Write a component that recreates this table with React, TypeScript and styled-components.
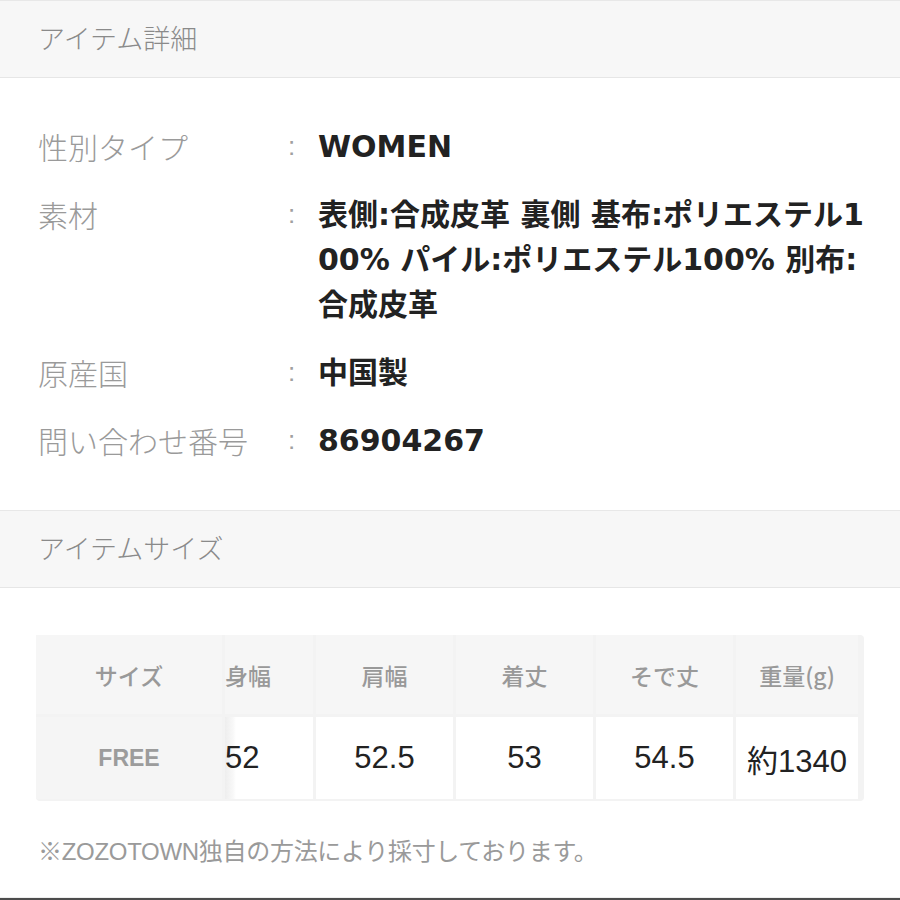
import React, { FunctionComponent } from 'react';
import styled, { createGlobalStyle } from 'styled-components';

const GlobalStyle = createGlobalStyle`
  body {
    margin: 0;
    background: #FFFFFF;
    font-family: "Liberation Sans", "Noto Sans CJK JP", sans-serif;
  }
`;

const Page = styled.div`
  width: 900px;
  height: 900px;
  overflow: hidden;
  display: flex;
  flex-direction: column;
  background: #FFFFFF;
`;

const SectionHeader = styled.div`
  box-sizing: border-box;
  height: 78px;
  display: flex;
  align-items: center;
  padding: 0 0 4px 38px;
  background: #F7F7F7;
  border-top: 1px solid #E8E8E8;
  border-bottom: 1px solid #E6E6E6;
  font-size: 27px;
  color: #8A8A8A;
  font-family: "Noto Sans CJK JP", sans-serif;
  font-weight: 300;
`;

const DetailList = styled.div`
  display: flex;
  flex-direction: column;
  gap: 23px;
  padding: 46px 0 47px 38px;
`;

const DetailRow = styled.div`
  display: grid;
  grid-template-columns: 246px 34px 1fr;
  line-height: 45px;
`;

const DetailLabel = styled.div`
  font-size: 30px;
  color: #9A9A9A;
  font-family: "Noto Sans CJK JP", sans-serif;
  font-weight: 300;
`;

const Colon = styled.div`
  font-size: 26px;
  color: #A0A0A0;
  padding-left: 4px;
`;

const DetailValue = styled.div`
  font-size: 30px;
  font-weight: 700;
  color: #222222;
  white-space: nowrap;
  font-family: "DejaVu Sans", "Noto Sans CJK JP", sans-serif;
`;

const TableArea = styled.div`
  padding: 47px 36px 0 36px;
`;

const SizeTable = styled.div`
  width: 822px;
  padding: 0 6px 2px 0;
  display: grid;
  grid-template-columns: 186px 88px 137px 137px 137px 122px;
  grid-template-rows: 79px 82px;
  column-gap: 3px;
  row-gap: 3px;
  background: #F3F3F3;
  border-radius: 4px;
`;

const HeadCell = styled.div<{ $align?: 'left' | 'center' }>`
  display: flex;
  align-items: center;
  justify-content: ${(p) => (p.$align === 'left' ? 'flex-start' : 'center')};
  background: #F6F6F6;
  font-size: 23px;
  font-weight: 500;
  color: #999999;
  font-family: "Noto Sans CJK JP", sans-serif;
`;

const BodyCell = styled.div<{ $variant?: 'label' | 'edge' | 'plain' }>`
  display: flex;
  align-items: center;
  justify-content: ${(p) => (p.$variant === 'edge' ? 'flex-start' : 'center')};
  background: ${(p) =>
    p.$variant === 'label'
      ? '#F5F5F5'
      : p.$variant === 'edge'
      ? 'linear-gradient(to right, #EEEEEE 0, #F8F8F8 8px, #FFFFFF 11px)'
      : '#FFFFFF'};
  font-size: ${(p) => (p.$variant === 'label' ? '23px' : '31px')};
  font-weight: ${(p) => (p.$variant === 'label' ? 700 : 400)};
  color: ${(p) => (p.$variant === 'label' ? '#9C9C9C' : '#222222')};
`;

const Note = styled.div`
  padding: 36px 0 0 38px;
  font-size: 24px;
  line-height: 30px;
  color: #9A9A9A;
  font-family: "Liberation Sans", "Noto Sans CJK JP", sans-serif;
  letter-spacing: -0.3px;
`;

const Spacer = styled.div`
  flex: 1;
`;

const BottomEdge = styled.div`
  height: 2px;
  border-top: 1px solid #EEEEEE;
  background: #4C4C4C;
  margin-top: 1px;
`;

const details: { label: string; value: React.ReactNode }[] = [
  { label: '性別タイプ', value: 'WOMEN' },
  {
    label: '素材',
    value: (
      <>
        表側:合成皮革 裏側 基布:ポリエステル1
        <br />
        00% パイル:ポリエステル100% 別布:
        <br />
        合成皮革
      </>
    ),
  },
  { label: '原産国', value: '中国製' },
  { label: '問い合わせ番号', value: '86904267' },
];

const headers = ['身幅', '肩幅', '着丈', 'そで丈', '重量(g)'];
const sizes = ['52', '52.5', '53', '54.5', '約1340'];

const App: FunctionComponent = () => (
  <Page>
    <GlobalStyle />
    <SectionHeader>アイテム詳細</SectionHeader>
    <DetailList>
      {details.map((d) => (
        <DetailRow key={d.label}>
          <DetailLabel>{d.label}</DetailLabel>
          <Colon>:</Colon>
          <DetailValue>{d.value}</DetailValue>
        </DetailRow>
      ))}
    </DetailList>
    <SectionHeader>アイテムサイズ</SectionHeader>
    <TableArea>
      <SizeTable>
        <HeadCell>サイズ</HeadCell>
        {headers.map((h, i) => (
          <HeadCell key={h} $align={i === 0 ? 'left' : 'center'}>
            {h}
          </HeadCell>
        ))}
        <BodyCell $variant="label">FREE</BodyCell>
        {sizes.map((s, i) => (
          <BodyCell key={s} $variant={i === 0 ? 'edge' : 'plain'}>
            {s}
          </BodyCell>
        ))}
      </SizeTable>
    </TableArea>
    <Note>※ZOZOTOWN独自の方法により採寸しております。</Note>
    <Spacer />
    <BottomEdge />
  </Page>
);

export default App;
